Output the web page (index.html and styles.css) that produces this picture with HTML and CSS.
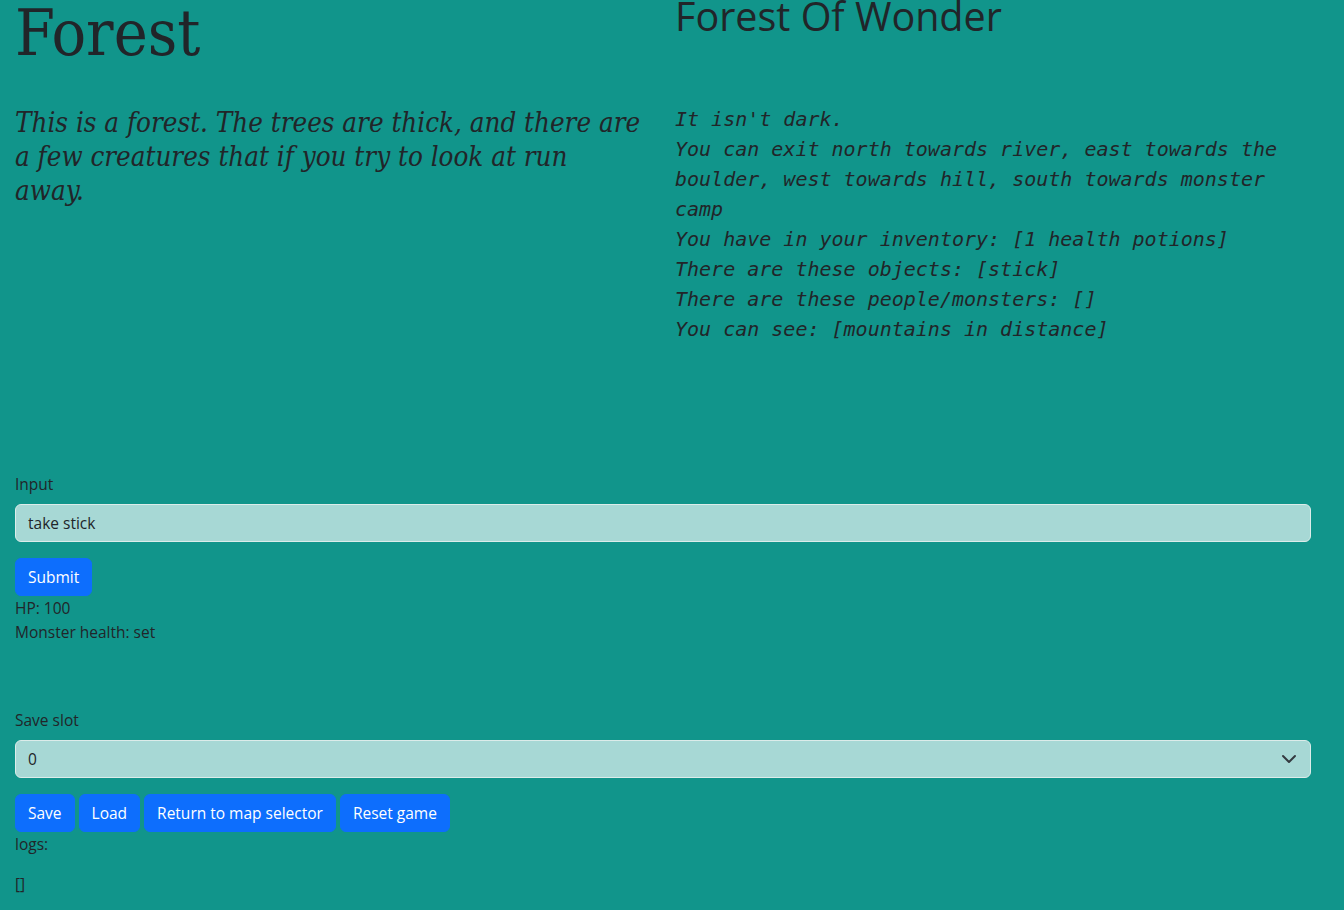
FILE: index.html
```html
<!DOCTYPE html>
<html lang="en">
<head>
<meta charset="utf-8">
<title>Forest</title>
<link rel="stylesheet" href="styles.css">
</head>
<body>
<main class="page">
  <div class="row">
    <section class="col">
      <h1 class="room-title">Forest</h1>
      <p class="room-desc">This is a forest. The trees are thick, and there are a few creatures that if you try to look at run away.</p>
    </section>
    <section class="col">
      <h2 class="map-title">Forest Of Wonder</h2>
      <div class="status">
        <p>It isn't dark.</p>
        <p>You can exit north towards river, east towards the boulder, west towards hill, south towards monster camp</p>
        <p>You have in your inventory: [1 health potions]</p>
        <p>There are these objects: [stick]</p>
        <p>There are these people/monsters: []</p>
        <p>You can see: [mountains in distance]</p>
      </div>
    </section>
  </div>

  <form class="command">
    <label class="form-label" for="cmd">Input</label>
    <input class="form-control" id="cmd" type="text" value="take stick">
    <div class="btn-row first">
      <button type="button" class="btn">Submit</button>
    </div>
  </form>
  <div class="stat">HP: 100</div>
  <div class="stat">Monster health: set</div>

  <div class="save">
    <label class="form-label" for="slot">Save slot</label>
    <div class="select">
      <span class="select-value">0</span>
      <svg class="chevron" width="16" height="16" viewBox="0 0 16 16"><path d="m2 5 6 6 6-6" fill="none" stroke="#343a40" stroke-width="2" stroke-linecap="round" stroke-linejoin="round"/></svg>
    </div>
    <div class="btn-row">
      <button type="button" class="btn">Save</button>
      <button type="button" class="btn">Load</button>
      <button type="button" class="btn">Return to map selector</button>
      <button type="button" class="btn">Reset game</button>
    </div>
  </div>
  <p class="logs-label">logs:</p>
  <p class="logs">[]</p>
</main>
</body>
</html>
```

FILE: styles.css
```css
html, body {
  margin: 0;
  padding: 0;
}
body {
  background: #11958b;
  color: #212529;
  font-family: "Open Sans", "Noto Sans", sans-serif;
  font-size: 15.5px;
  line-height: 24px;
  overflow: hidden;
}
.page {
  padding: 0 33px 0 15px;
  width: 1296px;
}
.row {
  display: grid;
  grid-template-columns: 636px 636px;
  column-gap: 24px;
}
.col {
  min-width: 0;
}
.room-title {
  font-family: "DejaVu Serif Condensed", "DejaVu Serif", serif;
  font-stretch: condensed;
  font-weight: 400;
  font-size: 64px;
  line-height: 66px;
  margin: 0;
}
.room-desc {
  font-family: "DejaVu Serif Condensed", "DejaVu Serif", serif;
  font-stretch: condensed;
  font-style: italic;
  font-size: 27.5px;
  line-height: 34px;
  max-width: 627px;
  margin: 39px 0 0 0;
}
.map-title {
  font-family: "Open Sans", sans-serif;
  font-weight: 400;
  font-size: 39.5px;
  line-height: 32px;
  margin: 0;
}
.status {
  margin-top: 72px;
  font-family: "DejaVu Sans Mono", monospace;
  font-style: italic;
  font-size: 20px;
  line-height: 30px;
}
.status p {
  margin: 0;
}
.command {
  margin: 128px 0 0 0;
}
.form-label {
  display: block;
  margin-bottom: 8px;
}
.form-control,
.select {
  box-sizing: border-box;
  display: block;
  width: 100%;
  height: 38px;
  padding: 6px 12px;
  font: inherit;
  color: #212529;
  background: #a7d8d5;
  border: 1px solid #dcecea;
  border-radius: 6px;
  outline: none;
}
.select {
  display: flex;
  align-items: center;
  justify-content: space-between;
  padding-right: 13px;
}
.btn-row {
  margin-top: 16px;
  display: flex;
  gap: 4px;
}
.btn {
  box-sizing: border-box;
  height: 38px;
  padding: 6px 12px;
  font: inherit;
  color: #fff;
  background: #0d6efd;
  border: 1px solid #0d6efd;
  border-radius: 6px;
  cursor: pointer;
}
.stat {
  line-height: 24px;
}
.save {
  margin-top: 64px;
}
.logs-label {
  margin: 0 0 16px 0;
}
.logs {
  margin: 0;
}
```
